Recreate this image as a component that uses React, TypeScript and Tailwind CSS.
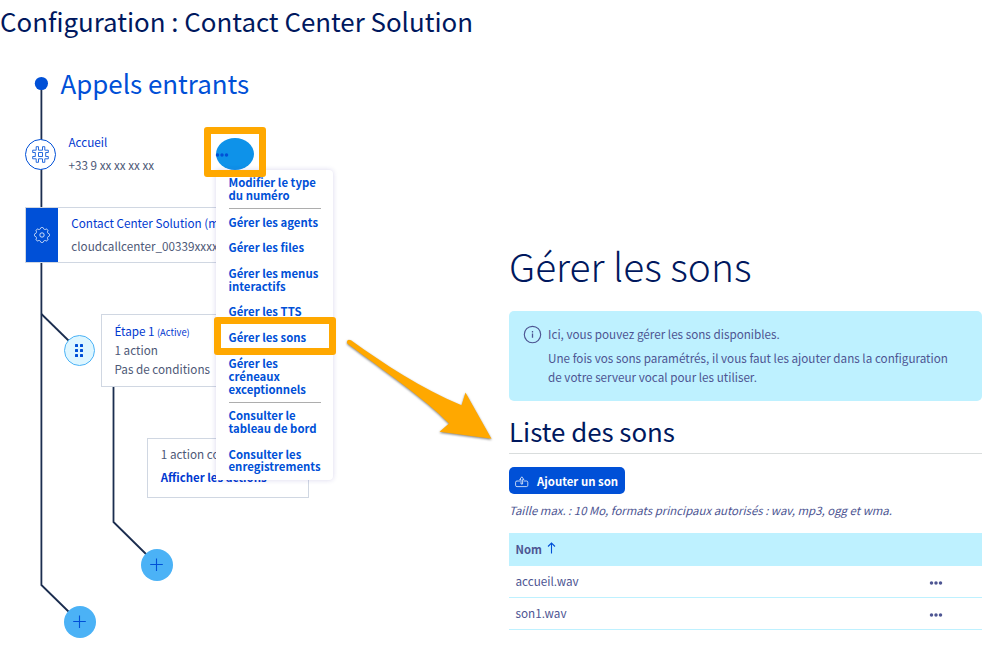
import type { ReactNode } from "react";

const menuItems: { lines: string[]; className: string }[] = [
  { lines: ["Modifier le type", "du numéro"], className: "border-b border-[#adadad] pb-1.5" },
  { lines: ["Gérer les agents"], className: "mt-[7px]" },
  { lines: ["Gérer les files"], className: "mt-3" },
  { lines: ["Gérer les menus", "interactifs"], className: "mt-[13px]" },
  { lines: ["Gérer les TTS"], className: "mt-3" },
  { lines: ["Gérer les sons"], className: "mt-[13px]" },
  { lines: ["Gérer les", "créneaux", "exceptionnels"], className: "mt-[13px] border-b border-[#adadad] pb-1.5" },
  { lines: ["Consulter le", "tableau de bord"], className: "mt-1.5" },
  { lines: ["Consulter les", "enregistrements"], className: "mt-[13px] leading-[12px]" },
];

const sounds = ["accueil.wav", "son1.wav"];

// Outline of an eight-toothed gear centred in a 16-unit box.
const gearOutline =
  Array.from({ length: 96 }, (_, i) => {
    const angle = (i / 96) * Math.PI * 2;
    const radius = 6.9 + 0.8 * Math.tanh(2 * Math.cos(8 * angle));
    const x = 8 + radius * Math.cos(angle);
    const y = 8 + radius * Math.sin(angle);
    return `${i === 0 ? "M" : "L"}${x.toFixed(2)} ${y.toFixed(2)}`;
  }).join("") + "Z";

function Dots({ className }: { className: string }) {
  return (
    <svg viewBox="0 0 14 4" fill="currentColor" className={`h-1 w-3.5 ${className}`}>
      <circle cx="2.5" cy="2" r="1.75" />
      <circle cx="7" cy="2" r="1.75" />
      <circle cx="11.5" cy="2" r="1.75" />
    </svg>
  );
}

function Connectors() {
  return (
    <svg viewBox="0 0 340 590" className="absolute left-0 top-[60px] h-[590px] w-[340px]" fill="none">
      <g stroke="#1b2d4f" strokeWidth="1.8">
        <path d="M41.4 26V525L70 553" />
        <path d="M41.4 254L69 281" />
        <path d="M113.5 326V462L148 496" />
      </g>
      <circle cx="41.4" cy="23.5" r="6.6" fill="#0050d7" />
    </svg>
  );
}

function AddNode({ className }: { className: string }) {
  return (
    <button className={`absolute flex size-8 items-center justify-center rounded-full bg-[#4bb2f6] text-[#0050d7] ${className}`}>
      <svg viewBox="0 0 14 14" className="size-3.5" stroke="currentColor" strokeWidth="1.1">
        <path d="M6.5 .5V13M.2 6.5H12.8" />
      </svg>
    </button>
  );
}

function Card({ className, children }: { className: string; children: ReactNode }) {
  return <div className={`absolute flex border border-[#d0d7e2] bg-white ${className}`}>{children}</div>;
}

function Diagram() {
  return (
    <section className="relative w-[509px] shrink-0 text-[11.7px] text-[#4d5876]">
      <div className="absolute inset-x-0 -top-[42px] h-[650px]">
        <Connectors />
        <h2 className="absolute left-[60.5px] top-[67px] text-[25.9px] leading-8 text-[#0050d7]">Appels entrants</h2>

        <div className="absolute left-[25px] top-[138.5px] flex size-[31px] items-center justify-center rounded-full border border-[#0050d7] bg-white text-[#0050d7]">
          <svg viewBox="0 0 17 17" className="size-[17px]" fill="none" stroke="currentColor" strokeWidth=".85" strokeLinejoin="round">
            <path d="M4.2 .7h2.3v3.5h4V.7h2.3v3.5h3.5v2.3h-2.6v4h2.6v2.3h-3.5v3.5h-2.3v-3.5h-4v3.5H4.2v-3.5H.7v-2.3h2.6v-4H.7V4.2h3.5z" />
            <path d="M6.5 6.5h4v4h-4z" />
          </svg>
        </div>
        <div className="absolute left-[68.5px] top-[130px] flex flex-col leading-[23px]">
          <span className="text-[#0038d0]">Accueil</span>
          <span>+33 9 xx xx xx xx</span>
        </div>

        <Card className="left-[25px] top-[207px] h-14 w-[240px]">
          <div className="flex w-8 items-center justify-center bg-[#0050d7] text-white">
            <svg viewBox="0 0 16 16" className="size-4" fill="none" stroke="currentColor" strokeWidth=".8" strokeLinejoin="round">
              <circle cx="8" cy="8" r="2.2" />
              <path d={gearOutline} />
            </svg>
          </div>
          <div className="ml-[13.3px] mt-[3px] flex flex-col whitespace-nowrap leading-[23px]">
            <span className="text-[#0038d0]">Contact Center Solution (m</span>
            <span>cloudcallcenter_00339xxxx</span>
          </div>
        </Card>

        <Card className="left-[101px] top-[314px] h-[73px] w-[180px]">
          <div className="ml-[12.5px] mt-1.5 flex flex-col leading-[19px]">
            <div className="flex h-[19px] items-baseline text-[#0038d0]">
              <span>Étape 1</span>
              <small className="ml-[2.3px] text-[9.4px] leading-none">(Active)</small>
            </div>
            <span>1 action</span>
            <span>Pas de conditions</span>
          </div>
        </Card>
        <div className="absolute left-[63.5px] top-[335px] flex size-[31px] items-center justify-center rounded-full border border-[#4bb2f6] bg-[#def6ff]">
          <div className="grid grid-cols-2 gap-x-[2.5px] gap-y-[2.2px]">
            {[0, 1, 2, 3, 4, 5].map((i) => (
              <i key={i} className="size-[2.8px] rounded-[0.6px] bg-[#0050d7]" />
            ))}
          </div>
        </div>

        <Card className="left-[147px] top-[438px] h-[60px] w-[162px]">
          <div className="ml-[12.8px] mt-[3px] flex flex-col leading-[23px]">
            <span>1 action co</span>
            <span className="mt-px text-[11.4px] font-bold text-[#0038d0]">Afficher les actions</span>
          </div>
        </Card>
        <AddNode className="left-[141px] top-[549px]" />
        <AddNode className="left-16 top-[606px]" />

        <button className="absolute left-[216px] top-[138px] flex h-8 w-[38px] items-center rounded-[50%] bg-[#0e92e9] text-[#0050d7]">
          <Dots className="-ml-px mt-px" />
        </button>
        <nav className="absolute left-[216px] top-[170px] flex h-[310px] w-[117px] flex-col rounded-r-[4px] bg-white pl-[12.5px] pt-1.5 text-[11.37px] font-bold leading-[13px] text-[#0050d7] shadow-[0_0_5px_rgba(60,50,160,0.2)]">
          {menuItems.map(({ lines, className }) => (
            <a key={lines.join()} className={`flex w-[92.5px] flex-col whitespace-nowrap ${className}`}>
              {lines.map((line) => (
                <span key={line}>{line}</span>
              ))}
            </a>
          ))}
        </nav>
        <div className="absolute left-[204px] top-[127px] h-[50px] w-[62px] rounded-[3px] border-[7px] border-[#ffa800]" />
        <div className="absolute left-[214px] top-[317px] h-[37.5px] w-[122.4px] rounded-[3px] border-[7px] border-[#ffa800]" />
        <svg viewBox="0 0 160 120" className="absolute left-[340px] top-[330px] h-[120px] w-40 drop-shadow-[0_1px_1.2px_rgba(0,0,0,0.5)]">
          <path
            d="M7 11.5Q7.5 9 11 10.3C44 34 82 59 121.5 75.3L125.5 62.5L151.5 108.7L99.5 101.8L109 93.5C84 68 44 41 7.5 13.8Q6.6 13 7 11.5Z"
            fill="#ffa800"
          />
        </svg>
      </div>
    </section>
  );
}

function SoundsPanel() {
  return (
    <section className="flex w-[473px] flex-col pt-[199px] text-[11.7px] text-[#4d5592]">
      <h2 className="h-[70px] text-[38.85px] font-light leading-[49px] text-[#00185e]">Gérer les sons</h2>

      <div className="flex h-[90px] rounded-[5px] bg-[#bef1ff] pl-[14px] pt-[14px]">
        <svg viewBox="0 0 19 19" className="size-[19px] shrink-0" fill="none" stroke="currentColor" strokeWidth="1.15">
          <circle cx="9.5" cy="9.5" r="8.2" />
          <path d="M9.5 8.6V12.8M9.5 6V7.4" strokeWidth="1.3" />
        </svg>
        <div className="-mt-px ml-1.5 whitespace-nowrap leading-[19px]">
          <p>Ici, vous pouvez gérer les sons disponibles.</p>
          <p className="mt-[5px]">Une fois vos sons paramétrés, il vous faut les ajouter dans la configuration</p>
          <p>de votre serveur vocal pour les utiliser.</p>
        </div>
      </div>

      <h3 className="mt-[13px] h-10 border-b border-[#d9dddd] text-[25.85px] leading-[34px] text-[#00185e]">Liste des sons</h3>

      <button className="mt-[13px] flex h-[27px] w-[116px] items-center rounded-[5px] bg-[#0050d7] pl-1.5 text-[11.4px] font-bold text-white">
        <svg viewBox="0 0 14 13" className="mt-0.5 h-[13px] w-3.5" fill="none" stroke="currentColor" strokeWidth=".75" strokeLinejoin="round">
          <path d="M5 6H2Q.6 6 .6 7.3V10.3Q.6 11.6 2 11.6H11.4Q12.8 11.6 12.8 10.3V7.3Q12.8 6 11.4 6H8.6" />
          <path d="M6 9V4.6H4.7L6.8 1.8L8.9 4.6H7.6V9Z" />
        </svg>
        <span className="ml-2 mt-px leading-[19px]">Ajouter un son</span>
      </button>
      <p className="mt-1.5 h-[33px] whitespace-nowrap text-[11.41px] italic leading-5">
        Taille max. : 10 Mo, formats principaux autorisés : wav, mp3, ogg et wma.
      </p>

      <div className="flex h-[33px] items-center bg-[#bef1ff] pl-[6.5px]">
        <span className="-mt-0.5 text-[11.3px] font-bold leading-5">Nom</span>
        <svg viewBox="0 0 9 12" className="-mt-1 ml-[5px] h-3 w-[9px]" fill="none" stroke="#0050d7" strokeWidth="1.1">
          <path d="M4.5 11.5V1M1 4.5L4.5 1L8 4.5" />
        </svg>
      </div>
      {sounds.map((name) => (
        <div key={name} className="flex h-8 items-center border-b border-[#bef1ff] pl-[6.5px] pr-[39px]">
          <span className="-mt-0.5 grow leading-5">{name}</span>
          <Dots className="mt-0.5" />
        </div>
      ))}
    </section>
  );
}

export default function App() {
  return (
    <main className="h-[650px] w-[1000px] overflow-hidden bg-white font-['Noto_Sans_CJK_SC','Noto_Sans',sans-serif]">
      <h1 className="h-[42px] text-[25.87px] leading-[42px] text-[#00185e]">Configuration : Contact Center Solution</h1>
      <div className="flex">
        <Diagram />
        <SoundsPanel />
      </div>
    </main>
  );
}
